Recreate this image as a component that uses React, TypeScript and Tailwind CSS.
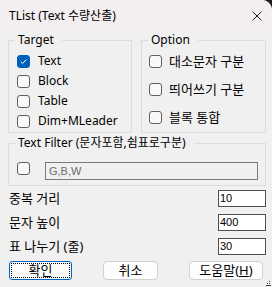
import { ReactNode } from 'react';

const FONT = '"Noto Sans", "Noto Sans CJK KR", sans-serif';

function Check({ checked = false }: { checked?: boolean }) {
  return (
    <span
      className={`flex w-[13px] h-[13px] shrink-0 items-center justify-center rounded-[3px] border ${
        checked ? 'bg-[#005fb8] border-[#005fb8]' : 'bg-[#f9f9f9] border-[#5f5f5f]'
      }`}
    >
      {checked && (
        <svg width="9" height="9" viewBox="0 0 9 9" fill="none">
          <path d="M1.8 4.6 L3.7 6.4 L7.3 2.6" stroke="white" strokeWidth="1" />
        </svg>
      )}
    </span>
  );
}

function CheckRow({ label, checked, gap, ko }: { label: string; checked?: boolean; gap: string; ko?: boolean }) {
  return (
    <div className={`flex h-[20px] items-center ${gap}`}>
      <Check checked={checked} />
      <span className={`leading-none ${ko ? 'text-[13px]' : ''}`}>{label}</span>
    </div>
  );
}

function Group({ title, className, legendClass, children }: { title: string; className: string; legendClass: string; children: ReactNode }) {
  return (
    <fieldset className={`border border-[#dcdcdc] min-w-0 ${className}`}>
      <legend className={`leading-[16px] pr-[8px] ${legendClass}`}>{title}</legend>
      {children}
    </fieldset>
  );
}

function NumField({ label, value }: { label: string; value: string }) {
  return (
    <div className="flex items-center justify-between">
      <span className="pl-[1px] text-[13px] leading-none">{label}</span>
      <div className="w-[48px] h-[17px] bg-white border border-[#4f4f4f] pl-[1px] flex items-center text-[11px] font-['Liberation_Sans'] leading-none">
        {value}
      </div>
    </div>
  );
}

export default function App() {
  return (
    <div className="w-[272px] h-[287px] bg-[#1c1c1c] overflow-hidden">
      <div
        className="relative flex h-full flex-col rounded-tr-[10px] bg-[#f0f0f0] text-[12px] text-black"
        style={{ fontFamily: FONT }}
      >
        {/* Title bar */}
        <div className="flex h-[31px] shrink-0 items-center justify-between rounded-tr-[10px] bg-[#f3eef0] pl-[9px] pr-[10px]">
          <span className="leading-none">TList (Text 수량산출)</span>
          <svg width="10" height="10" viewBox="0 0 10 10">
            <path d="M0.5 0.5 L9.5 9.5 M9.5 0.5 L0.5 9.5" stroke="#1a1a1a" strokeWidth="1" />
          </svg>
        </div>

        <div className="flex flex-col pl-[8px] pr-[6px]">
          {/* Target / Option */}
          <div className="mt-[1px] flex gap-[9px]">
            <Group title="Target" className="w-[124px] px-[8px] pt-[3px] pb-[1px]" legendClass="-ml-[2px] pl-[3px]">
              <CheckRow label="Text" checked gap="gap-[8px]" />
              <CheckRow label="Block" gap="gap-[8px]" />
              <CheckRow label="Table" gap="gap-[8px]" />
              <CheckRow label="Dim+MLeader" gap="gap-[8px]" />
            </Group>
            <Group title="Option" className="flex-1 px-[7px] pt-[3px] pb-[5px]" legendClass="pl-[2px]">
              <div className="flex flex-col gap-[8px]">
                <CheckRow label="대소문자 구분" gap="gap-[7px]" ko />
                <CheckRow label="띄어쓰기 구분" gap="gap-[7px]" ko />
                <CheckRow label="블록 통합" gap="gap-[7px]" ko />
              </div>
            </Group>
          </div>

          {/* Text filter */}
          <Group title="Text Filter (문자포함,쉼표로구분)" className="mt-[2px] pl-[8px] pr-[7px] pt-[11px] pb-[5px]" legendClass="-ml-[2px] pl-[3px]">
            <div className="flex items-start gap-[15px]">
              <Check />
              <div className="flex h-[18px] flex-1 items-center border border-[#7a7a7a] bg-[#f0f0f0] pl-[3px] text-[11px] leading-none text-[#6d6d6d] font-['Liberation_Sans']">
                G,B,W
              </div>
            </div>
          </Group>

          {/* Numbers */}
          <div className="mt-[4px] flex flex-col gap-[7px]">
            <NumField label="중복 거리" value="10" />
            <NumField label="문자 높이" value="400" />
            <NumField label="표 나누기 (줄)" value="30" />
          </div>

          {/* Buttons */}
          <div className="mt-[6px] flex pl-[1px] text-[13px]">
            <button className="flex h-[19px] w-[63px] items-center justify-center rounded-[3px] border border-[#0067c0] bg-[#fdfdfd] p-[2px]">
              <span className="flex h-full w-full items-center justify-center outline-1 outline-dotted outline-black leading-none">
                확인
              </span>
            </button>
            <button className="ml-[31px] flex h-[19px] w-[55px] items-center justify-center rounded-[4px] border border-[#d0d0d0] bg-[#fdfdfd] leading-none">
              취소
            </button>
            <button className="ml-[31px] flex h-[19px] w-[74px] items-center justify-center rounded-[4px] border border-[#d0d0d0] bg-[#fdfdfd] leading-none">
              도움말(<span className="underline">H</span>)
            </button>
          </div>
        </div>

        {/* Size grip */}
        <svg className="absolute bottom-[1px] right-[1px]" width="5" height="5" viewBox="0 0 5 5">
          <rect x="3" y="0" width="1" height="1" fill="#444" />
          <rect x="1" y="2" width="1" height="1" fill="#444" />
          <rect x="3" y="2" width="1" height="1" fill="#444" />
          <rect x="0" y="4" width="5" height="1" fill="#444" />
        </svg>
      </div>
    </div>
  );
}
